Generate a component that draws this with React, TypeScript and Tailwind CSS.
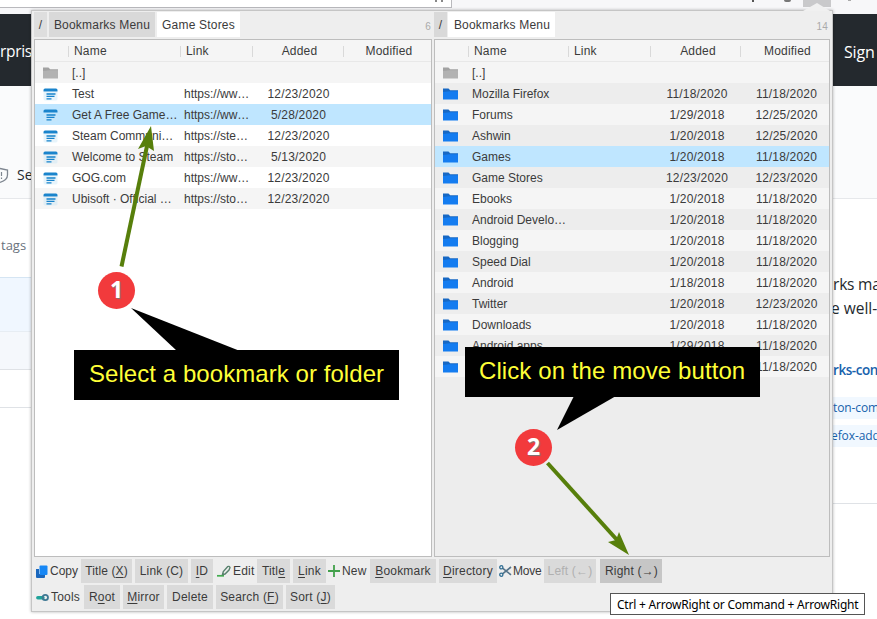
import React from "react";

type Row = { name: string; link?: string; added?: string; modified?: string; kind: "up" | "folder" | "link"; selected?: boolean };

const leftRows: Row[] = [
  { name: "[..]", kind: "up" },
  { name: "Test", link: "https://ww…", added: "12/23/2020", kind: "link" },
  { name: "Get A Free Game…", link: "https://ww…", added: "5/28/2020", kind: "link", selected: true },
  { name: "Steam Communi…", link: "https://ste…", added: "12/23/2020", kind: "link" },
  { name: "Welcome to Steam", link: "https://sto…", added: "5/13/2020", kind: "link" },
  { name: "GOG.com", link: "https://ww…", added: "12/23/2020", kind: "link" },
  { name: "Ubisoft · Official …", link: "https://sto…", added: "12/23/2020", kind: "link" },
];

const folder = (name: string, added: string, modified: string, selected = false): Row => ({ name, added, modified, kind: "folder", selected });

const rightRows: Row[] = [
  { name: "[..]", kind: "up" },
  folder("Mozilla Firefox", "11/18/2020", "11/18/2020"),
  folder("Forums", "1/29/2018", "12/25/2020"),
  folder("Ashwin", "1/20/2018", "12/25/2020"),
  folder("Games", "1/20/2018", "11/18/2020", true),
  folder("Game Stores", "12/23/2020", "12/23/2020"),
  folder("Ebooks", "1/20/2018", "11/18/2020"),
  folder("Android Develo…", "1/20/2018", "11/18/2020"),
  folder("Blogging", "1/20/2018", "11/18/2020"),
  folder("Speed Dial", "1/20/2018", "11/18/2020"),
  folder("Android", "1/18/2018", "11/18/2020"),
  folder("Twitter", "1/20/2018", "12/23/2020"),
  folder("Downloads", "1/20/2018", "11/18/2020"),
  folder("Android apps", "1/29/2018", "11/18/2020"),
  folder("", "", "11/18/2020"),
];

function RowIcon({ kind }: { kind: Row["kind"] }) {
  if (kind === "link") {
    return (
      <svg width="15" height="13" viewBox="0 0 15 13">
        <path d="M.5 3.6V2Q.5 .4 2 .4H13Q14.5 .4 14.5 2V3.6Z" fill="#1a84cc" />
        <path d="M.5 4H14.5V11Q14.5 12.4 13 12.4H2Q.5 12.4 .5 11Z" fill="#c9e6f7" fillOpacity=".45" />
        <path d="M3.5 6H12.5M3.5 8.3H11.5M3.5 10.8H8.5" stroke="#1682cc" strokeWidth="1.3" />
      </svg>
    );
  }
  const up = kind === "up";
  return (
    <svg width="15" height="12" viewBox="0 0 15 12">
      <path d="M0 .5H5.5L7.2 2.3H15V5H0Z" fill={up ? "#a2a2a2" : "#1768c4"} />
      <path d="M0 4L7 3.2H15V11.5H0Z" fill={up ? "#b2b2b2" : "#147cf0"} />
    </svg>
  );
}

function Panel({ rows, left }: { rows: Row[]; left?: boolean }) {
  const cols = left ? "grid-cols-[33px_112px_72px_91px_88px]" : "grid-cols-[33px_100px_82px_90px_89px]";
  const datePad = left ? "pl-[2px]" : "pl-[4px]";
  const headPad = left ? "pl-[3px]" : "pl-[5px]";
  return (
    <div className={`h-[518px] border border-[#bdbdbd] ${left ? "w-[398px] bg-white" : "w-[396px] bg-[#ededed]"}`}>
      <div className={`grid h-[22px] items-center border-b border-[#e8e8e8] bg-[#f5f5f5] pt-px ${cols}`}>
        <span />
        <span className="h-[11px] border-l border-[#d9d9d9] pl-[5px] leading-[11px]">Name</span>
        <span className="h-[11px] border-l border-[#d9d9d9] pl-[5px] leading-[11px]">Link</span>
        <span className={`h-[11px] border-l border-[#d9d9d9] text-center leading-[11px] ${headPad}`}>Added</span>
        <span className={`h-[11px] border-l border-[#d9d9d9] text-center leading-[11px] ${headPad}`}>Modified</span>
      </div>
      {rows.map((r, i) => {
        const stripe = i % 2 === 0 ? "bg-[#f5f5f5]" : left ? "bg-white" : "bg-[#ededed]";
        return (
          <div key={i} className={`grid h-[21px] items-center ${cols} ${r.selected ? "bg-[#bfe6ff]" : stripe}`}>
            <span className="pl-[8px] pt-px"><RowIcon kind={r.kind} /></span>
            <span className="whitespace-nowrap pl-[4px] tracking-normal">{r.name}</span>
            <span className="whitespace-nowrap pl-[4px] tracking-normal">{r.link}</span>
            <span className={`text-center ${datePad}`}>{r.added}</span>
            <span className={`text-center ${datePad}`}>{r.modified}</span>
          </div>
        );
      })}
    </div>
  );
}

function Button({ className, children }: { className: string; children: React.ReactNode }) {
  return <button className={`h-[24px] shrink-0 whitespace-nowrap text-center leading-[24px] ${className}`}>{children}</button>;
}

const U = ({ children }: { children: React.ReactNode }) => <span className="underline underline-offset-[1.5px]">{children}</span>;

const CopyIcon = () => (
  <svg width="12" height="13" viewBox="0 0 12 13">
    <path d="M0 4H3V9H9V12Q9 13 8 13H1Q0 13 0 12Z" fill="#1b67bd" />
    <rect x="3.5" y=".5" width="8" height="9.5" rx="1" fill="#1787f5" />
  </svg>
);
const EditIcon = () => (
  <svg width="14" height="12" viewBox="0 0 14 12" fill="none">
    <path d="M0 10.8H7" stroke="#43ad50" strokeWidth="1.7" />
    <path d="M5.5 9.5L6.3 6.5L10.5 1.7Q12.2 .8 13 2.5L12 5L8 9Z" stroke="#58816d" strokeWidth="1.4" />
  </svg>
);
const PlusIcon = () => (
  <svg width="12" height="12" viewBox="0 0 12 12"><path d="M6 0V12M0 6H12" stroke="#42a04b" strokeWidth="1.8" /></svg>
);
const ScissorsIcon = () => (
  <svg width="13" height="12" viewBox="0 0 13 12" fill="none">
    <path d="M3.5 3.2L12 9.8M3.5 8.8L12 2" stroke="#55748a" strokeWidth="1.7" />
    <circle cx="2.3" cy="2.3" r="1.6" stroke="#326f94" strokeWidth="1.3" />
    <circle cx="2.3" cy="9.7" r="1.6" stroke="#326f94" strokeWidth="1.3" />
  </svg>
);
const ToolsIcon = () => (
  <svg width="13" height="9" viewBox="0 0 13 9" fill="none">
    <path d="M1.8 4.7H7" stroke="#20a39a" strokeWidth="3.4" strokeLinecap="round" />
    <circle cx="9.3" cy="4.5" r="2.7" stroke="#3f7893" strokeWidth="1.8" />
  </svg>
);

function BackgroundPage() {
  return (
    <div className="flex h-full flex-col bg-white font-['Open_Sans','Noto_Sans',sans-serif]">
      <div className="flex h-[14px] items-start justify-between bg-[#f7f7f9]">
        <div className="flex h-[8px] w-[452px] justify-end border-b border-r border-[#b9b9bd] bg-white pr-2">
          <span className="h-[2px] w-[2px] bg-[#888]" />
          <span className="ml-[4px] h-[2px] w-[2px] bg-[#888]" />
        </div>
        <div className="flex h-[14px] w-[125px] items-start">
          <span className="h-[2px] w-[2px] bg-[#555]" />
          <span className="ml-[30px] h-[2px] w-[7px] rounded-b bg-[#777]" />
          <span className="ml-[12px] h-[7px] w-[28px] bg-[#c9c9cb]" />
          <span className="ml-[17px] h-px w-[3px] bg-[#aaa]" />
        </div>
      </div>
      <div className="flex h-[72px] items-center justify-between bg-[#24292e] pt-[3px] text-[16px] text-white">
        <span className="w-[31px] overflow-hidden whitespace-nowrap text-[15.5px] tracking-[-0.3px]">rprise</span>
        <span className="w-[33px] tracking-[-0.2px]">Sign</span>
      </div>
      <div className="flex h-[113px] items-end border-b border-[#e6e8eb] bg-[#fafbfc] pb-[12px]">
        <svg className="mb-[2px]" width="9" height="17" viewBox="0 0 9 17" fill="none">
          <path d="M0 1.5L7.5 3V8Q7.5 13 0 15.5" stroke="#7e8690" strokeWidth="1.3" />
          <path d="M1.5 5V9M1.5 10.5V12" stroke="#7e8690" strokeWidth="1.2" />
        </svg>
        <span className="ml-[8px] w-[15px] overflow-hidden text-[14px] leading-[22px] text-[#24292e]">Se</span>
      </div>
      <div className="flex h-[420px] justify-between">
        <div className="w-[32px]">
          <div className="h-[79px] border-b border-[#d5e5f3] pl-[1px] pt-[36px] text-[13px] leading-[20px] text-[#6a737d]">tags</div>
          <div className="h-[54px] border-b border-[#e7edf3] bg-[#f0f7ff]" />
          <div className="h-[38px] border-b border-[#dfe2e6] bg-[#f5f8fc]" />
          <div className="h-[38px] border-b border-[#dfe2e6]" />
        </div>
        <div className="w-[46px] whitespace-nowrap">
          <div className="h-[305px] border-b border-[#dfe2e6]">
            <p className="pt-[73px] pl-[2px] text-[15.5px] leading-[24px] tracking-[-0.2px] text-[#24292e]">rks ma</p>
            <p className="text-[15.5px] leading-[24px] text-[#24292e]">e well-</p>
            <p className="mt-[38px] pl-[2px] text-[13.5px] font-semibold leading-[24px] tracking-[-0.45px] text-[#1762ac]">rks-con</p>
            <p className="mt-[15px] bg-[#f1f8ff] pl-[2px] text-[12px] leading-[22px] tracking-[-0.1px] text-[#1762ac]">ton-com</p>
            <p className="mt-[6px] bg-[#f1f8ff] text-[12px] leading-[22px] tracking-[-0.1px] text-[#1762ac]">efox-add</p>
          </div>
        </div>
      </div>
    </div>
  );
}

function Popup() {
  return (
    <div className="absolute left-[31px] top-[10px] h-[602px] w-[802px] border border-[#c5c5c5] bg-[#eeeeee] font-['Liberation_Sans',Arial,sans-serif] text-[12px] tracking-[0.2px] text-[#3b3b3b] shadow-[0_0_3px_rgba(0,0,0,0.28)]">
      <div className="flex h-[28px] pl-[2px] pt-[1px] leading-[26px]">
        <div className="flex w-[400px] gap-[2px]">
          <span className="h-[25px] w-[13px] bg-[#dedede] text-center">/</span>
          <span className="h-[25px] w-[106px] bg-[#d9d9d9] text-center">Bookmarks Menu</span>
          <span className="h-[25px] w-[83px] bg-white text-center">Game Stores</span>
          <span className="ml-auto mr-[3px] pt-[3px] text-[10px] leading-[24px] text-[#aaa]">6</span>
        </div>
        <div className="flex flex-1 gap-[1px]">
          <span className="h-[25px] w-[13px] bg-[#d9d9d9] text-center">/</span>
          <span className="h-[25px] w-[107px] bg-white pl-px text-center">Bookmarks Menu</span>
          <span className="ml-auto mr-[4px] pt-[3px] text-[10px] leading-[24px] text-[#aaa]">14</span>
        </div>
      </div>
      <div className="flex gap-[2px] pl-[2px]">
        <Panel rows={leftRows} left />
        <Panel rows={rightRows} />
      </div>
      <div className="mt-[2px] flex h-[24px] items-center pl-[4px]">
        <CopyIcon /><span className="ml-[2px] w-[31px] tracking-normal">Copy</span>
        <Button className="w-[51px] bg-[#dadada] tracking-[0.1px]">Title (<U>X</U>)</Button>
        <Button className="ml-[3px] w-[53px] bg-[#dadada]">Link (C)</Button>
        <Button className="ml-[3px] w-[22px] bg-[#dadada]"><U>I</U>D</Button>
        <span className="ml-[4px] flex w-[40px] items-center gap-[2px]"><EditIcon />Edit</span>
        <Button className="w-[33px] bg-[#dadada]">Titl<U>e</U></Button>
        <Button className="ml-[3px] w-[33px] bg-[#dadada]"><U>L</U>ink</Button>
        <span className="ml-[2px] flex w-[42px] items-center gap-[2px]"><PlusIcon />New</span>
        <Button className="w-[66px] bg-[#dadada]"><U>B</U>ookmark</Button>
        <Button className="ml-[3px] w-[58px] bg-[#dadada]"><U>D</U>irectory</Button>
        <span className="ml-[2px] flex w-[45px] items-center gap-[1px] tracking-[-0.2px]"><ScissorsIcon />Move</span>
        <Button className="w-[52px] bg-[#dadada] text-[#b0b0b0]">Left (←)</Button>
        <Button className="ml-[4px] w-[62px] bg-[#c6c6c6] pl-px">Right (→)</Button>
      </div>
      <div className="mt-[2px] flex h-[24px] items-center pl-[4px]">
        <ToolsIcon /><span className="ml-[2px] w-[33px]">Tools</span>
        <Button className="w-[36px] bg-[#dadada]">R<U>o</U>ot</Button>
        <Button className="ml-[3px] w-[41px] bg-[#dadada]"><U>M</U>irror</Button>
        <Button className="ml-[3px] w-[46px] bg-[#dadada]">Delete</Button>
        <Button className="ml-[3px] w-[67px] bg-[#dadada]">Search (<U>F</U>)</Button>
        <Button className="ml-[3px] w-[49px] bg-[#dadada]">Sort (<U>J</U>)</Button>
      </div>
    </div>
  );
}

function Annotations() {
  return (
    <>
      <svg className="absolute left-0 top-0" width="877" height="619" viewBox="0 0 877 619">
        <path d="M803 11H830L817 3Z" fill="#f0f0f0" />
        <path d="M121.5 266.5L147 146" stroke="#577f0b" strokeWidth="4" />
        <path d="M151 126L154 151L146 146L138 149Z" fill="#577f0b" />
        <path d="M547.5 463L618 541" stroke="#577f0b" strokeWidth="4" />
        <path d="M629 555L619 532L616 540L608 542Z" fill="#577f0b" />
        <path d="M131 308L240 351H177Z" fill="#000" />
        <path d="M557 430L574 396H616Z" fill="#000" />
      </svg>
      <div className="absolute left-[98px] top-[272px] flex h-[37px] w-[37px] items-center justify-center rounded-full bg-[#f23a3c] pb-[3px] font-['Open_Sans',sans-serif] text-[23px] font-bold leading-none text-white [text-shadow:1px_1px_1px_#777]">1</div>
      <div className="absolute left-[515px] top-[429px] flex h-[37px] w-[37px] items-center justify-center rounded-full bg-[#f23a3c] pb-[3px] font-['Open_Sans',sans-serif] text-[23px] font-bold leading-none text-white [text-shadow:1px_1px_1px_#777]">2</div>
      <div className="absolute left-[74px] top-[350px] h-[50px] w-[325px] whitespace-nowrap bg-black pl-[15px] font-['Liberation_Sans',Arial,sans-serif] text-[24px] leading-[47px] tracking-[0.06px] text-[#ffff37]">Select a bookmark or folder</div>
      <div className="absolute left-[465px] top-[347px] h-[50px] w-[295px] whitespace-nowrap bg-black pl-[14px] font-['Liberation_Sans',Arial,sans-serif] text-[24px] leading-[47px] tracking-[0.09px] text-[#ffff37]">Click on the move button</div>
      <div className="absolute left-[610px] top-[593px] h-[22px] w-[255px] whitespace-nowrap border border-[#555] bg-white pl-[6px] font-['Noto_Sans',sans-serif] text-[12px] leading-[21px] tracking-[-0.22px] text-black">Ctrl + ArrowRight or Command + ArrowRight</div>
    </>
  );
}

export default function App() {
  return (
    <main className="relative h-[619px] w-[877px] overflow-hidden">
      <BackgroundPage />
      <Popup />
      <Annotations />
    </main>
  );
}
